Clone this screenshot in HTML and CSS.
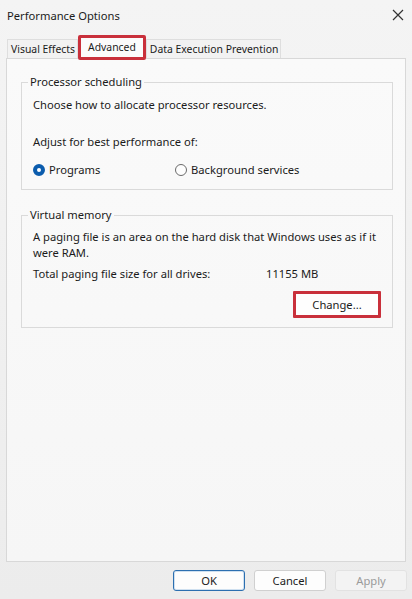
FILE: index.html
```html
<!DOCTYPE html>
<html lang="en">
<head>
  <meta charset="UTF-8" />
  <meta name="viewport" content="width=device-width, initial-scale=1.0"/>
  <title>Performance Options</title>
  <link rel="stylesheet" href="styles.css">
</head>
<body>

  <div class="window">
    <div class="titlebar">
      <span class="title">Performance Options</span>
      <svg class="close" width="12" height="12" viewBox="0 0 12 12">
        <path d="M1 1 L11 11 M11 1 L1 11" stroke="#333" stroke-width="1.2" fill="none"/>
      </svg>
    </div>

    <div class="tabs">
      <div class="tab">Visual Effects</div>
      <div class="tab active">Advanced</div>
      <div class="tab">Data Execution Prevention</div>
    </div>

    <div class="panel">
      <fieldset class="group">
        <legend>Processor scheduling</legend>
        <p class="line">Choose how to allocate processor resources.</p>
        <p class="line adjust">Adjust for best performance of:</p>
        <div class="radios">
          <label class="radio checked"><span class="dot"></span>Programs</label>
          <label class="radio"><span class="dot"></span>Background services</label>
        </div>
      </fieldset>

      <fieldset class="group vm">
        <legend>Virtual memory</legend>
        <p class="line">A paging file is an area on the hard disk that Windows uses as if it were RAM.</p>
        <div class="total">
          <span class="total-label">Total paging file size for all drives:</span>
          <span>11155 MB</span>
        </div>
        <div class="change-row">
          <button class="btn change">Change...</button>
        </div>
      </fieldset>
    </div>

    <div class="footer">
      <button class="btn default">OK</button>
      <button class="btn">Cancel</button>
      <button class="btn disabled">Apply</button>
    </div>
  </div>

</body>
</html>
```

FILE: styles.css
```css
* {
  box-sizing: border-box;
  font-family: 'Noto Sans', 'Open Sans', sans-serif;
}

body {
  margin: 0;
  background: #eeeeee;
}

.window {
  width: 412px;
  height: 599px;
  display: flex;
  flex-direction: column;
  background: linear-gradient(#f4f4f4, #ececec);
  color: #1b1b1b;
  font-size: 11.2px;
}

.titlebar {
  height: 30px;
  display: flex;
  align-items: center;
  justify-content: space-between;
  padding: 0 7px 0 7px;
  font-size: 11.2px;
}

.close {
  margin-right: 1px;
}

.tabs {
  height: 28px;
  display: flex;
  align-items: flex-end;
  padding-left: 7px;
  font-size: 10.4px;
}

.tab {
  height: 19px;
  padding: 0 2px 0 3px;
  line-height: 18px;
  background: #f2f2f2;
  border: 1px solid #dedede;
  border-bottom: none;
}

.tab.active {
  height: 25px;
  padding: 0 7px;
  line-height: 18px;
  background: #fbfbfb;
  border: 3px solid #c9303b;
  border-radius: 2px;
  position: relative;
  z-index: 1;
  margin-bottom: -2px;
}

.panel {
  height: 504px;
  margin: 0 6px;
  padding: 15px 12px 0 14px;
  background: linear-gradient(#fafafa, #f6f6f6);
  border: 1px solid #d8d8d8;
  display: flex;
  flex-direction: column;
  gap: 17px;
}

.group {
  margin: 0;
  padding: 7px 11px 11px 11px;
  border: 1px solid #dadada;
}

.group legend {
  padding: 0 2px;
  margin-left: -5px;
  line-height: 16px;
}

.line {
  margin: 0;
  line-height: 16px;
}

.adjust {
  margin-top: 21px;
}

.radios {
  display: flex;
  margin-top: 12px;
}

.radio {
  display: flex;
  align-items: center;
  gap: 4px;
  width: 142px;
  line-height: 16px;
}

.dot {
  width: 12px;
  height: 12px;
  border-radius: 50%;
  border: 1px solid #6a6a6a;
  background: #fdfdfd;
}

.radio.checked .dot {
  border: 4px solid #0b5cad;
  background: #ffffff;
}

.vm {
  padding-top: 4px;
  padding-bottom: 9px;
}

.vm .line {
  margin-top: 2px;
  padding-right: 0;
}

.total {
  display: flex;
  margin-top: 5px;
  line-height: 16px;
}

.total-label {
  width: 233px;
}

.change-row {
  display: flex;
  justify-content: flex-end;
  margin-top: 9px;
}

.btn {
  height: 21px;
  padding: 0;
  font-size: 11.2px;
  color: #1b1b1b;
  background: #fdfdfd;
  border: 1px solid #d0d0d0;
  border-radius: 3px;
}

.btn.change {
  width: 88px;
  height: 27px;
  background: #fefefe;
  border: 3px solid #c9303b;
  border-radius: 1px;
}

.footer {
  flex: 1;
  display: flex;
  align-items: center;
  justify-content: flex-end;
  gap: 9px;
  padding: 0 5px 0 0;
}

.footer .btn {
  width: 72px;
}

.btn.default {
  border: 1px solid #2c6fb0;
  box-shadow: inset 0 0 0 1px #cfe0f0;
}

.btn.disabled {
  color: #9a9a9a;
  background: #f3f3f3;
  border-color: #e2e2e2;
}
```
